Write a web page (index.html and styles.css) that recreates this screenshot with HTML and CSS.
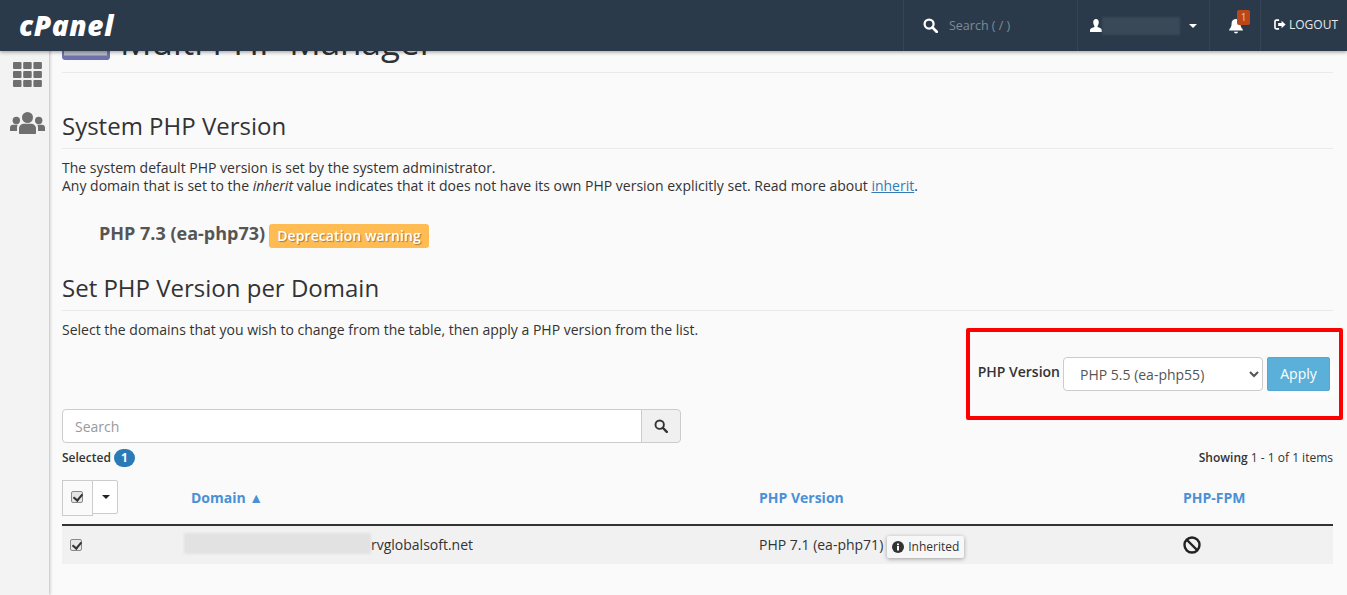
FILE: index.html
```html
<!DOCTYPE html>
<html lang="en">
<head>
<meta charset="utf-8">
<title>MultiPHP Manager</title>
<link rel="stylesheet" href="styles.css">
</head>
<body>
<header class="topbar">
  <div class="logo">cPanel</div>
  <div class="top-search">
    <svg class="ico-search" viewBox="0 0 16 16" width="15" height="15"><circle cx="6.5" cy="6.5" r="4.8" fill="none" stroke="#fff" stroke-width="2.4"/><path d="M10 10l4.6 4.6" stroke="#fff" stroke-width="3" stroke-linecap="round"/></svg>
    <span class="top-search-text">Search ( / )</span>
  </div>
  <div class="top-user">
    <svg viewBox="0 0 12 13" width="12" height="13"><path fill="#fff" d="M6 0c1.8 0 2.8 1.3 2.8 3.2S7.800 6.800 7.400 7.400c0 .9 4.600 1.500 4.600 3.600V13H0v-2c0-2.100 4.600-2.700 4.600-3.600C4.200 6.800 3.200 5.100 3.200 3.200S4.200 0 6 0z"/></svg>
    <span class="user-blur"></span>
    <span class="caret caret-white"></span>
  </div>
  <div class="top-bell">
    <svg viewBox="0 0 16 16" width="16" height="17"><path fill="#fff" d="M8 1.500c-2.600 0-4.400 1.900-4.400 4.300 0 3.400-.9 4.800-2.400 6.200v1h13.600v-1c-1.500-1.400-2.400-2.800-2.400-6.200 0-2.400-1.800-4.300-4.400-4.300zM6 14.200a2 1.800 0 0 0 4 0z"/></svg>
    <span class="bell-badge">1</span>
  </div>
  <div class="top-logout">
    <svg viewBox="0 0 13 12" width="12" height="11"><path fill="none" stroke="#fff" stroke-width="1.800" d="M5.500 1.200H2.400C1.500 1.200 1 1.800 1 2.600v6.800c0 .8.500 1.400 1.400 1.400h3.100"/><path fill="#fff" d="M4.500 4.400h3.700V1.800L12.600 6 8.200 10.200V7.600H4.500z"/></svg>
    <span>LOGOUT</span>
  </div>
</header>

<div class="layout">
  <aside class="sidebar">
    <svg class="side-grid" viewBox="0 0 29 25" width="29" height="25"><g fill="#6f6f6f"><rect width="8.500" height="7" rx="1"/><rect x="10.200" width="8.500" height="7" rx="1"/><rect x="20.400" width="8.500" height="7" rx="1"/><rect y="9" width="8.500" height="7" rx="1"/><rect x="10.200" y="9" width="8.500" height="7" rx="1"/><rect x="20.400" y="9" width="8.500" height="7" rx="1"/><rect y="18" width="8.500" height="7" rx="1"/><rect x="10.200" y="18" width="8.500" height="7" rx="1"/><rect x="20.400" y="18" width="8.500" height="7" rx="1"/></g></svg>
    <svg class="side-users" viewBox="0 0 35 22" width="35" height="22"><g fill="#6f6f6f"><circle cx="17.500" cy="5.500" r="5.500"/><circle cx="6.300" cy="8.500" r="3.700"/><circle cx="28.700" cy="8.500" r="3.700"/><path d="M9 21v-4.500c0-3 2.500-4.800 5-4.800h7c2.500 0 5 1.800 5 4.800V21c0 .6-.4 1-1 1H10c-.6 0-1-.4-1-1z"/><path d="M0 19v-3.500c0-1.700 1.400-2.800 3-2.800h4.800C7 13.700 7 15 7 16.500V19z"/><path d="M35 19v-3.500c0-1.700-1.400-2.800-3-2.800h-4.800c.8 1 .8 2.300.8 3.800V19z"/></g></svg>
  </aside>

  <main class="content">
    <div class="title-row">
      <svg class="title-icon" viewBox="0 0 48 20" width="48" height="20"><rect y="0" width="47" height="16" fill="#b9bac6"/><path d="M0 10h2v5.500h43V0h3v17c0 1.500-1 3-2.500 3H3c-1.500 0-3-1-3-3z" fill="#6d72ac"/></svg>
      <h1 class="page-title">Multi PHP Manager</h1>
    </div>

    <h2 class="section-title first">System PHP Version</h2>
    <p class="text">The system default PHP version is set by the system administrator.<br>Any domain that is set to the <em>inherit</em> value indicates that it does not have its own PHP version explicitly set. Read more about <a class="link" href="#">inherit</a>.</p>
    <div class="system-version"><strong class="version-name">PHP 7.3 (ea-php73)</strong><span class="warn-badge">Deprecation warning</span></div>

    <h2 class="section-title second">Set PHP Version per Domain</h2>
    <p class="text">Select the domains that you wish to change from the table, then apply a PHP version from the list.</p>

    <div class="apply-row">
      <label class="apply-label" for="ver">PHP Version</label>
      <select class="apply-select" id="ver"><option>PHP 5.5 (ea-php55)</option></select>
      <button class="apply-btn">Apply</button>
    </div>

    <div class="search-row">
      <input class="search-input" placeholder="Search">
      <button class="search-btn" aria-label="Search"><svg viewBox="0 0 16 16" width="14" height="14"><circle cx="6.500" cy="6.500" r="4.800" fill="none" stroke="#333" stroke-width="2.200"/><path d="M10 10l4.600 4.600" stroke="#333" stroke-width="2.800" stroke-linecap="round"/></svg></button>
    </div>

    <div class="status-row">
      <div class="selected">Selected <span class="count">1</span></div>
      <div class="showing"><strong class="showing-label">Showing</strong> 1 - 1 of 1 items</div>
    </div>

    <table class="domains">
      <colgroup><col class="c1"><col class="c2"><col class="c3"><col class="c4"></colgroup>
      <thead>
        <tr>
          <th class="th-check"><div class="check-group"><span class="check-btn"><input type="checkbox" checked></span><span class="drop-btn"><span class="caret"></span></span></div></th>
          <th>Domain ▲</th>
          <th>PHP Version</th>
          <th>PHP-FPM</th>
        </tr>
      </thead>
      <tbody>
        <tr>
          <td><input class="row-check" type="checkbox" checked></td>
          <td class="td-domain"><span class="domain-blur"></span>rvglobalsoft.net</td>
          <td>PHP 7.1 (ea-php71)<span class="inherited"><svg viewBox="0 0 12 12" width="12" height="12"><circle cx="6" cy="6" r="6" fill="#333"/><rect x="5" y="5" width="2" height="4.500" fill="#fff"/><rect x="5" y="2.500" width="2" height="1.700" fill="#fff"/></svg>Inherited</span></td>
          <td><svg class="ban" viewBox="0 0 18 18" width="18" height="18"><circle cx="9" cy="9" r="7.500" fill="none" stroke="#222" stroke-width="2.400"/><path d="M4 4l10 10" stroke="#222" stroke-width="2.400"/></svg></td>
        </tr>
      </tbody>
    </table>
  </main>
</div>

<div class="highlight"></div>
</body>
</html>
```

FILE: styles.css
```css
* { box-sizing: border-box; }
html, body { margin: 0; height: 100%; overflow: hidden; }
body {
  font-family: "Open Sans", sans-serif;
  font-size: 14px;
  line-height: 18px;
  color: #333;
  background: #fafafa;
}

/* top bar */
.topbar {
  position: absolute;
  top: 0; left: 0; right: 0;
  height: 51px;
  display: flex;
  align-items: stretch;
  background: #2b3a4a;
  box-shadow: 0 1px 4px rgba(0,0,0,.4);
  color: #fff;
  z-index: 5;
}
.logo {
  font-weight: 800;
  font-style: italic;
  font-size: 28px;
  line-height: 50px;
  letter-spacing: .6px;
  padding-left: 19px;
  margin-right: auto;
}
.top-search {
  width: 174px;
  display: flex;
  align-items: center;
  gap: 11px;
  padding-left: 19px;
  border-left: 1px solid #354556;
}
.top-search-text { font-size: 12.500px; color: #7f8a96; }
.top-user {
  width: 132px;
  display: flex;
  align-items: center;
  padding-left: 12px;
  border-left: 1px solid #354556;
}
.user-blur {
  width: 78px;
  height: 18px;
  background: #3a4958;
  filter: blur(1px);
  margin: 0 9px 0 0;
}
.caret {
  display: inline-block;
  width: 0; height: 0;
  border-left: 4px solid transparent;
  border-right: 4px solid transparent;
  border-top: 4px solid #222;
}
.caret-white { border-top-color: #fff; }
.top-bell {
  width: 51px;
  position: relative;
  display: flex;
  align-items: center;
  padding-left: 18px;
  border-left: 1px solid #354556;
}
.bell-badge {
  position: absolute;
  left: 27px; top: 10px;
  width: 13px; height: 15px;
  border-radius: 2px;
  background: #b9471a;
  color: #e8c9b8;
  font-size: 10px;
  line-height: 15px;
  text-align: center;
}
.top-logout {
  width: 87px;
  display: flex;
  align-items: center;
  gap: 3px;
  padding: 0 0 2px 13px;
  border-left: 1px solid #354556;
  font-size: 12px;
  color: #e6e9ec;
}

/* page */
.layout { display: flex; height: 100%; }
.sidebar {
  width: 49px;
  flex: none;
  display: flex;
  flex-direction: column;
  align-items: center;
  padding: 62px 0 0 6px;
  background: #f3f3f3;
  box-shadow: 1px 0 3px rgba(0,0,0,.25);
}
.side-users { margin-top: 25px; }
.content {
  flex: 1;
  min-width: 0;
  padding: 0 14px 0 13px;
  position: relative;
}

.title-row {
  height: 73px;
  display: flex;
  align-items: flex-end;
  gap: 10px;
  padding-bottom: 12px;
  border-bottom: 1px solid #eaeaea;
}
.title-icon { flex: none; }
.page-title {
  margin: 0 0 -2px;
  font-size: 35px;
  line-height: 40px;
  font-weight: 400;
}
.section-title {
  margin: 0 0 10px;
  font-size: 24px;
  line-height: 30px;
  font-weight: 400;
  padding-bottom: 7px;
  border-bottom: 1px solid #eaeaea;
  color: #333;
}
.section-title.first { margin-top: 38px; }
.section-title.second { margin-top: 25px; }
.text { margin: 0; }
.link { color: #337ab7; }
.system-version {
  display: flex;
  align-items: center;
  height: 24px;
  margin: 29px 0 0 37px;
}
.version-name { font-size: 18px; font-weight: 700; color: #555; padding-bottom: 7px; }
.warn-badge {
  margin-left: 4px;
  height: 24px;
  padding: 0 8px;
  border-radius: 3px;
  background: #ffbc52;
  color: #fff;
  font-size: 14px;
  line-height: 24px;
  font-weight: 600;
  letter-spacing: .1px;
  text-shadow: 1px 1px 1px rgba(0,0,0,.35);
}

/* apply */
.apply-row {
  display: flex;
  justify-content: flex-end;
  align-items: center;
  gap: 4px;
  margin: 18px 3px 0 0;
  height: 34px;
}
.apply-label { font-weight: 600; font-size: 14px; color: #333; padding-bottom: 4px; margin-right: -1px; }
.apply-select {
  width: 200px;
  height: 34px;
  padding: 0 12px;
  font: 14px "Open Sans", sans-serif;
  color: #555;
  background: #fff;
  border: 1px solid #ccc;
  border-radius: 4px;
}
.apply-btn {
  width: 63px;
  height: 34px;
  padding: 0 0 2px;
  font: 14px "Open Sans", sans-serif;
  color: #fff;
  background: #5bb0da;
  border: 1px solid #56a8d2;
  border-radius: 2px;
  box-shadow: 4px 6px 6px rgba(255,255,255,.9);
}

/* search */
.search-row { display: flex; width: 619px; margin-top: 18px; }
.search-input {
  flex: 1;
  height: 34px;
  padding: 0 12px;
  font: 14px "Open Sans", sans-serif;
  background: #fff;
  border: 1px solid #ccc;
  border-radius: 4px 0 0 4px;
}
.search-input::placeholder { color: #999; }
.search-btn {
  width: 40px;
  height: 34px;
  margin-left: -1px;
  padding: 0;
  background: #f0f0f0;
  border: 1px solid #ccc;
  border-radius: 0 4px 4px 0;
  display: flex;
  align-items: center;
  justify-content: center;
}

.status-row {
  display: flex;
  justify-content: space-between;
  align-items: center;
  height: 20px;
  margin-top: 5px;
  font-size: 12px;
}
.selected { font-weight: 600; }
.showing-label { font-weight: 600; }
.count {
  display: inline-block;
  width: 21px;
  height: 18px;
  border-radius: 10px;
  background: #2a7ab8;
  color: #fff;
  font-weight: 700;
  line-height: 18px;
  text-align: center;
}

/* table */
.domains {
  width: 100%;
  table-layout: fixed;
  border-collapse: collapse;
  margin-top: 12px;
}
.c1 { width: 121px; }
.c2 { width: 568px; }
.c3 { width: 424px; }
.c4 { width: 158px; }
.domains th {
  height: 44px;
  padding: 0 8px 9px;
  text-align: left;
  color: #4a90d6;
  font-size: 14px;
  font-weight: 700;
  border-bottom: 2px solid #333;
}
.domains th.th-check { padding: 0 0 8px; }
.check-group { display: flex; align-items: flex-start; }
.check-btn {
  width: 31px; height: 36px;
  display: flex;
  align-items: center;
  justify-content: center;
  border: 1px solid #ccc;
  padding: 0 1px 2px 0;
}
.drop-btn {
  width: 26px; height: 34px;
  margin-left: -1px;
  padding-left: 1px;
  display: flex;
  align-items: center;
  justify-content: center;
  background: #fff;
  border: 1px solid #ccc;
  border-radius: 0 2px 2px 0;
}
input[type="checkbox"] {
  appearance: none;
  position: relative;
  display: block;
  width: 12px;
  height: 12px;
  margin: 0;
  background: #e6e6e6;
  border: 1px solid #8a8a8a;
  border-radius: 2px;
}
input[type="checkbox"]::after {
  content: "";
  position: absolute;
  left: 3px; top: 0;
  width: 4px;
  height: 7px;
  border: solid #333;
  border-width: 0 2px 2px 0;
  transform: rotate(40deg);
}
.domains td {
  height: 39px;
  padding: 0 8px;
  background: #f1f1f1;
  vertical-align: middle;
}
.row-check { margin-top: -2px; }
.td-domain { white-space: nowrap; }
.domain-blur {
  display: inline-block;
  width: 187px;
  height: 21px;
  margin: -4px 0 -4px -7px;
  background: #e2e2e2;
  filter: blur(1px);
}
.inherited {
  display: inline-flex;
  align-items: center;
  gap: 4px;
  height: 22px;
  margin: -4px 0 -4px 4px;
  padding: 0 5px;
  vertical-align: -3px;
  background: #f7f7f7;
  border-radius: 2px;
  box-shadow: 0 1px 4px rgba(0,0,0,.35);
  font-size: 12px;
}
.ban { display: block; }

/* annotation drawn over the page */
.highlight {
  position: absolute;
  left: 966px; top: 328px;
  width: 377px; height: 92px;
  border: 4px solid #f00;
  border-radius: 2px;
  pointer-events: none;
}
```
